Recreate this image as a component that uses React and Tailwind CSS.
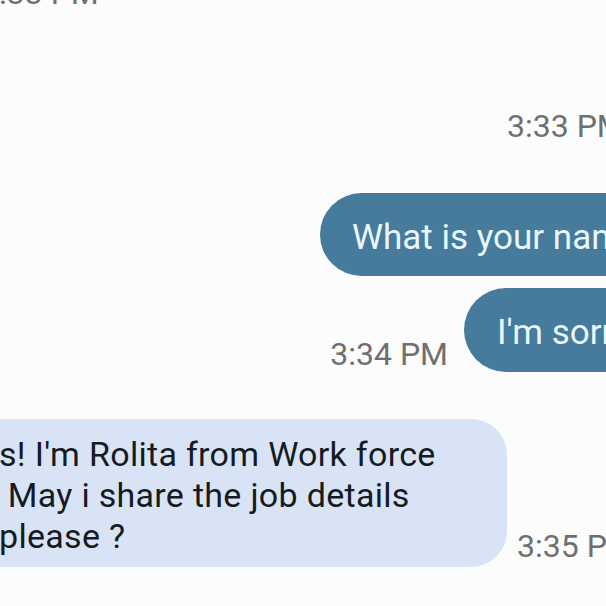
export default function App() {
  return (
    <div className="w-[606px] h-[606px] overflow-hidden bg-[#fcfcfc] font-['Roboto',sans-serif]">
      <div className="w-[800px] -ml-[40px] -mt-[25px] flex flex-col">
        {/* earlier timestamp, cut off at the top */}
        <div className="pl-[21px] text-[32px] leading-[36px] text-[#6f6f6f] whitespace-nowrap">3:33 PM</div>

        <div className="mt-[97px] pl-[547px] text-[32px] leading-[36px] text-[#6f6f6f] whitespace-nowrap">3:33 PM</div>

        {/* sent */}
        <div className="mt-[49px] flex justify-end">
          <div className="w-[440px] h-[83px] rounded-full bg-[#467b9c] flex items-center pl-[32px] pt-[7px] text-[35px] leading-[40px] text-[#e8f7fb] whitespace-nowrap">
            What is your name?
          </div>
        </div>

        <div className="mt-[12px] flex justify-end items-end">
          <div className="mr-[16px] text-[32px] leading-[36px] text-[#6f6f6f] whitespace-nowrap">3:34 PM</div>
          <div className="w-[296px] h-[84px] rounded-full bg-[#467b9c] flex items-center pl-[33px] pt-[6px] text-[35px] leading-[40px] text-[#e8f7fb] whitespace-nowrap">
            I'm sorry?
          </div>
        </div>

        {/* received */}
        <div className="mt-[47px] flex items-end">
          <div className="w-[547px] h-[148px] rounded-[36px] bg-[#d9e3f6] pl-[39px] pt-[15px] pb-[10px] text-[34px] leading-[41px] tracking-[0.3px] text-[#161b22] whitespace-pre">
            <div>s! I'm Rolita from Work force</div>
            <div> May i share the job details</div>
            <div>please ?</div>
          </div>
          <div className="ml-[10px] mb-[3px] text-[32px] leading-[36px] text-[#6f6f6f] whitespace-nowrap">3:35 PM</div>
        </div>
      </div>
    </div>
  );
}
